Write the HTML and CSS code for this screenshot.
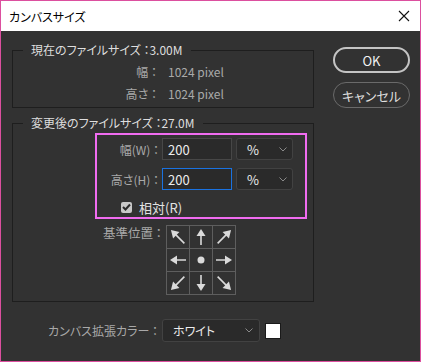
FILE: index.html
```html
<!DOCTYPE html>
<html lang="ja">
<head>
  <meta charset="UTF-8" />
  <title>カンバスサイズ</title>
  <link rel="stylesheet" href="styles.css">
</head>
<body>
  <div class="window">
    <div class="titlebar">
      <span class="title">カンバスサイズ</span>
      <svg class="close" width="12" height="12" viewBox="0 0 12 12">
        <path d="M1 1 L11 11 M11 1 L1 11" stroke="#111" stroke-width="1.1" fill="none" />
      </svg>
    </div>

    <div class="content">
      <div class="main">
        <fieldset class="group current">
          <legend>現在のファイルサイズ ：3.00M</legend>
          <div class="info-row"><span class="info-label">幅 ：</span><span class="info-value">1024 pixel</span></div>
          <div class="info-row"><span class="info-label">高さ ：</span><span class="info-value">1024 pixel</span></div>
        </fieldset>

        <fieldset class="group next">
          <legend>変更後のファイルサイズ ：27.0M</legend>
          <div class="highlight">
            <div class="field-row">
              <label class="field-label">幅(W) ：</label>
              <input class="num" type="text" value="200" />
              <div class="select unit">%<svg class="chev" width="8" height="5" viewBox="0 0 8 5"><path d="M0.5 0.5 L4 4 L7.5 0.5" stroke="#8a8a8a" fill="none" /></svg></div>
            </div>
            <div class="field-row">
              <label class="field-label">高さ(H) ：</label>
              <input class="num focus" type="text" value="200" />
              <div class="select unit">%<svg class="chev" width="8" height="5" viewBox="0 0 8 5"><path d="M0.5 0.5 L4 4 L7.5 0.5" stroke="#8a8a8a" fill="none" /></svg></div>
            </div>
            <label class="check">
              <span class="box"><svg width="9" height="8" viewBox="0 0 9 8"><path d="M1 4 L3.5 6.5 L8 1.5" stroke="#2a2a2a" stroke-width="2" fill="none" /></svg></span>
              相対(R)
            </label>
          </div>

          <div class="anchor-row">
            <span class="anchor-label">基準位置 ：</span>
            <div class="anchor-grid">
              <div class="cell"><svg class="arrow nw" viewBox="0 0 22 22"><path d="M11 20 V7" /><polygon points="11,1 6.5,8.5 15.5,8.5" /></svg></div>
              <div class="cell"><svg class="arrow n" viewBox="0 0 22 22"><path d="M11 19 V8" /><polygon points="11,3 6.5,10 15.5,10" /></svg></div>
              <div class="cell"><svg class="arrow ne" viewBox="0 0 22 22"><path d="M11 20 V7" /><polygon points="11,1 6.5,8.5 15.5,8.5" /></svg></div>
              <div class="cell"><svg class="arrow w" viewBox="0 0 22 22"><path d="M11 19 V8" /><polygon points="11,3 6.5,10 15.5,10" /></svg></div>
              <div class="cell"><svg class="dot" viewBox="0 0 22 22"><circle cx="11" cy="11" r="3.5" /></svg></div>
              <div class="cell"><svg class="arrow e" viewBox="0 0 22 22"><path d="M11 19 V8" /><polygon points="11,3 6.5,10 15.5,10" /></svg></div>
              <div class="cell"><svg class="arrow sw" viewBox="0 0 22 22"><path d="M11 20 V7" /><polygon points="11,1 6.5,8.5 15.5,8.5" /></svg></div>
              <div class="cell"><svg class="arrow s" viewBox="0 0 22 22"><path d="M11 19 V8" /><polygon points="11,3 6.5,10 15.5,10" /></svg></div>
              <div class="cell"><svg class="arrow se" viewBox="0 0 22 22"><path d="M11 20 V7" /><polygon points="11,1 6.5,8.5 15.5,8.5" /></svg></div>
            </div>
          </div>
        </fieldset>

        <div class="ext-row">
          <span class="ext-label">カンバス拡張カラー ：</span>
          <div class="select color">ホワイト<svg class="chev" width="8" height="5" viewBox="0 0 8 5"><path d="M0.5 0.5 L4 4 L7.5 0.5" stroke="#8a8a8a" fill="none" /></svg></div>
          <span class="swatch"></span>
        </div>
      </div>

      <div class="buttons">
        <button class="btn ok">OK</button>
        <button class="btn cancel">キャンセル</button>
      </div>
    </div>
  </div>
</body>
</html>
```

FILE: styles.css
```css
* {
  box-sizing: border-box;
}
body {
  margin: 0;
  font-family: "Noto Sans CJK JP", "Noto Sans", sans-serif;
  font-feature-settings: "palt";
  font-size: 12px;
  background: #323232;
}
.window {
  width: 421px;
  height: 362px;
  border: 1px solid #dc4f9f;
  background: #323232;
  display: flex;
  flex-direction: column;
}
.titlebar {
  height: 30px;
  background: #fff;
  display: flex;
  align-items: center;
  justify-content: space-between;
  padding: 0 10px 0 8px;
  flex-shrink: 0;
}
.title {
  font-size: 12px;
  color: #000;
}
.content {
  display: flex;
  padding: 10px 0 0 11px;
  gap: 19px;
}
.main {
  width: 302px;
}
.group {
  margin: 0;
  padding: 0;
  min-width: 0;
  border: 1px solid #1e1e1e;
}
.group legend {
  margin-left: 10px;
  padding: 0 8px;
  line-height: 18px;
  font-size: 12px;
  color: #dedede;
}
.current {
  padding: 1px 0 3px;
}
.info-row {
  display: flex;
  height: 22px;
  align-items: center;
  color: #a9a9a9;
}
.info-label {
  width: 144px;
  text-align: right;
}
.info-value {
  margin-left: 11px;
}
.next {
  margin-top: 6px;
  padding: 0 0 6px;
}
.highlight {
  margin: 1px 0 0 82px;
  width: 212px;
  border: 2px solid #f06cf0;
  padding: 3px 0 1px;
}
.field-row {
  display: flex;
  align-items: center;
  height: 22px;
  margin-bottom: 8px;
}
.field-label {
  width: 62px;
  text-align: right;
  color: #a9a9a9;
}
.num {
  margin-left: 3px;
  width: 70px;
  height: 22px;
  background: #2a2a2a;
  border: 1px solid #474747;
  color: #ececec;
  font: inherit;
  font-size: 13px;
  padding: 0 0 0 5px;
  outline: none;
}
.num.focus {
  border-color: #1a72e0;
}
.select {
  display: flex;
  align-items: center;
  justify-content: space-between;
  background: #2a2a2a;
  border: 1px solid #424242;
  border-radius: 3px;
  color: #ececec;
}
.unit {
  margin-left: 4px;
  width: 57px;
  height: 22px;
  padding: 0 5px 0 10px;
  font-size: 13px;
}
.check {
  display: flex;
  align-items: center;
  height: 18px;
  margin: 1px 0 0 24px;
  color: #e2e2e2;
  font-size: 13px;
  gap: 7px;
}
.box {
  width: 11px;
  height: 11px;
  background: #c8c8c8;
  border-radius: 2px;
  display: flex;
  align-items: center;
  justify-content: center;
}
.anchor-row {
  display: flex;
  margin-top: 6px;
}
.anchor-label {
  width: 149px;
  text-align: right;
  color: #a9a9a9;
  line-height: 16px;
  font-size: 12.5px;
}
.anchor-grid {
  margin-left: 4px;
  display: grid;
  grid-template-columns: repeat(3, 22px);
  grid-template-rows: repeat(3, 22px);
  gap: 1px;
  padding: 1px;
  background: #5e5e5e;
}
.cell {
  background: #323232;
}
.cell svg {
  display: block;
  width: 22px;
  height: 22px;
}
.arrow path {
  stroke: #dadada;
  stroke-width: 1.6;
}
.arrow polygon,
.dot circle {
  fill: #dadada;
}
.nw { transform: rotate(-45deg); }
.ne { transform: rotate(45deg); }
.w { transform: rotate(-90deg); }
.e { transform: rotate(90deg); }
.sw { transform: rotate(-135deg); }
.s { transform: rotate(180deg); }
.se { transform: rotate(135deg); }
.ext-row {
  display: flex;
  align-items: center;
  margin-top: 17px;
}
.ext-label {
  width: 146px;
  text-align: right;
  color: #a9a9a9;
}
.color {
  margin-left: 4px;
  width: 98px;
  height: 23px;
  padding: 0 6px 0 10px;
}
.swatch {
  margin-left: 5px;
  width: 16px;
  height: 16px;
  background: #fff;
  border: 1px solid #1a1a1a;
}
.buttons {
  display: flex;
  flex-direction: column;
  gap: 9px;
  margin-top: 6px;
}
.btn {
  width: 77px;
  height: 26px;
  border-radius: 13px;
  background: transparent;
  font: inherit;
  font-size: 13px;
  padding: 0;
}
.ok {
  border: 2px solid #c4c4c4;
  color: #f2f2f2;
}
.cancel {
  border: 1.5px solid #6a6a6a;
  color: #dedede;
}
```
